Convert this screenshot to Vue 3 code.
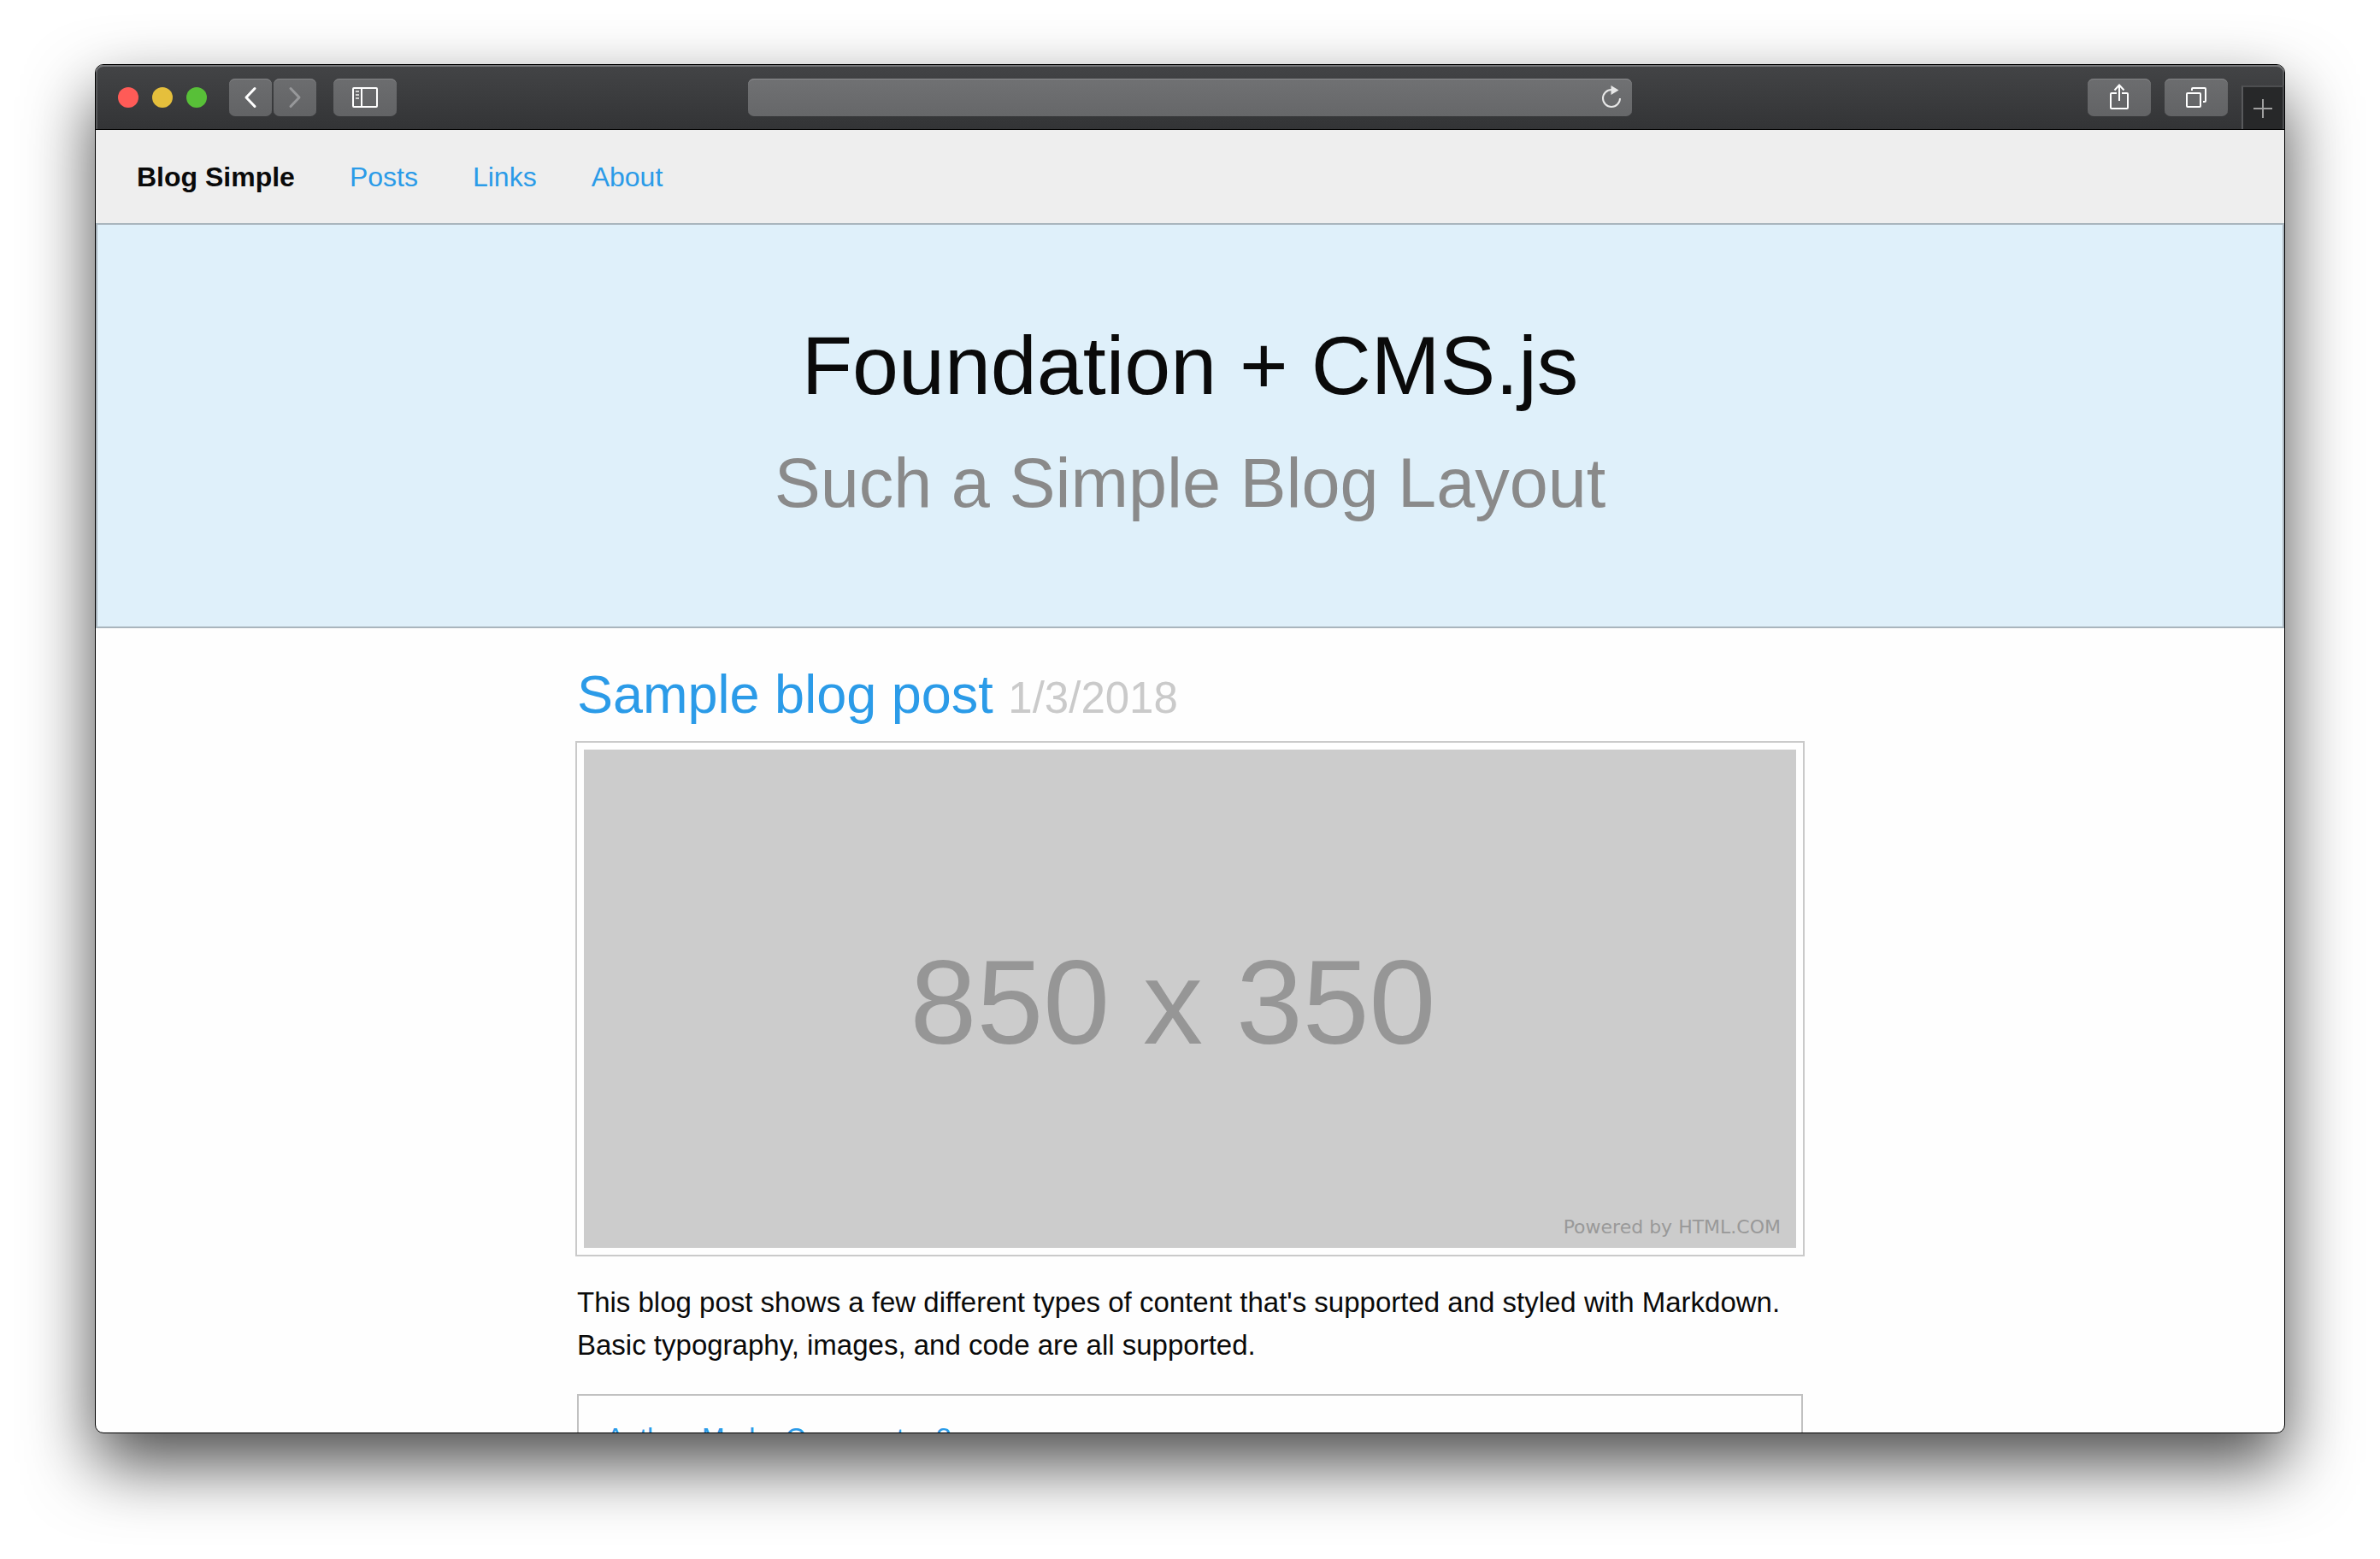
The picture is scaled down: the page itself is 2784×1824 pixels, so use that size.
<script setup>
const links = ['Posts', 'Links', 'About']
const lights = ['close', 'minimize', 'maximize']
</script>

<template>
  <div class="desktop">
    <div class="browser">
      <header class="toolbar">
        <div class="side">
          <div class="lights">
            <button v-for="l in lights" :key="l" type="button" :class="['light', l]" :aria-label="l"></button>
          </div>
          <div class="pair">
            <button type="button" class="tool narrow" aria-label="Back">
              <svg width="50" height="44" viewBox="0 0 50 44"><path d="M30 11.500L20 22l10 10.500" fill="none" stroke="#fff" stroke-width="3" stroke-linecap="round" stroke-linejoin="round" /></svg>
            </button>
            <button type="button" class="tool narrow" aria-label="Forward">
              <svg width="50" height="44" viewBox="0 0 50 44"><path d="M20 11.500L30 22l-10 10.500" fill="none" stroke="#97989a" stroke-width="3" stroke-linecap="round" stroke-linejoin="round" /></svg>
            </button>
          </div>
          <button type="button" class="tool" aria-label="Show sidebar">
            <svg width="74" height="44" viewBox="0 0 74 44">
              <rect x="23" y="11" width="28" height="22" rx="1" fill="none" stroke="#fff" stroke-width="2" />
              <path d="M33 11v22" stroke="#fff" stroke-width="2" />
              <path d="M26 15h4M26 19h4M26 23h4" stroke="#d0d0d0" stroke-width="2" />
            </svg>
          </button>
        </div>
        <div class="address">
          <input type="text" aria-label="Address" />
          <button type="button" class="reload" aria-label="Reload">
            <svg width="24" height="28" viewBox="0 0 24 28">
              <path d="M12 5A10 10 0 1 0 22 15" fill="none" stroke="#e8e8e8" stroke-width="2" />
              <path d="M11.500 0l9 5.500-9 5.500z" fill="#e8e8e8" />
            </svg>
          </button>
        </div>
        <div class="side end">
          <button type="button" class="tool" aria-label="Share">
            <svg width="74" height="44" viewBox="0 0 74 44" fill="none" stroke="#fff" stroke-width="2">
              <path d="M34 17h-6a1 1 0 0 0-1 1v16a1 1 0 0 0 1 1h18a1 1 0 0 0 1-1V18a1 1 0 0 0-1-1h-6" />
              <path d="M37 26V8M31.500 13.500L37 7.500l5.500 6" />
            </svg>
          </button>
          <button type="button" class="tool" aria-label="Show tabs">
            <svg width="74" height="44" viewBox="0 0 74 44" fill="none" stroke="#fff" stroke-width="2">
              <rect x="26" y="17" width="16" height="16" rx="1" />
              <path d="M32 14v-2a1 1 0 0 1 1-1h14a1 1 0 0 1 1 1v14a1 1 0 0 1-1 1h-2" />
            </svg>
          </button>
          <button type="button" class="newtab" aria-label="New tab">
            <svg width="22" height="22" viewBox="0 0 22 22"><path d="M11 0v22M0 11h22" stroke="#a0a0a0" stroke-width="2" /></svg>
          </button>
        </div>
      </header>

      <div class="page">
        <nav class="menu">
          <strong>Blog Simple</strong>
          <a v-for="l in links" :key="l" href="#">{{ l }}</a>
        </nav>
        <section class="hero">
          <h1>Foundation + CMS.js</h1>
          <h2>Such a Simple Blog Layout</h2>
        </section>
        <main>
          <article>
            <h3><a href="#">Sample blog post</a> <small>1/3/2018</small></h3>
            <div class="thumbnail">
              <span class="dimensions">850 x 350</span>
              <span class="credit">Powered by HTML.COM</span>
            </div>
            <p>This blog post shows a few different types of content that's supported and styled with Markdown. Basic typography, images, and code are all supported.</p>
            <div class="callout"><a href="#">Author: Marke Commenter 3</a></div>
          </article>
        </main>
      </div>
    </div>
  </div>
</template>

<style>
body {
  margin: 0;
  background: #fff;
}
</style>

<style scoped>
* {
  box-sizing: border-box;
}
.desktop {
  height: 100vh;
  padding: 75px 111px 147px;
  overflow: hidden;
  font-family: "Liberation Sans", Arial, sans-serif;
  font-size: 32px;
  line-height: 50px;
  color: #0a0a0a;
}
.browser {
  display: flex;
  flex-direction: column;
  height: 100%;
  border: 1px solid #000;
  border-radius: 10px;
  overflow: hidden;
  background: #fefefe;
  box-shadow: 0 36px 80px rgba(0, 0, 0, 0.7);
}
.toolbar {
  display: grid;
  flex: none;
  grid-template-columns: 1fr 1034px 1fr;
  align-items: center;
  height: 76px;
  border-bottom: 1px solid #000;
  border-radius: 9px 9px 0 0;
  background: linear-gradient(#434446, #333436);
  box-shadow: inset 0 2px #76777a, inset 2px 0 #57585a, inset -2px 0 #57585a;
}
.side {
  display: flex;
  align-items: center;
  gap: 20px;
  padding-left: 26px;
}
.side.end {
  align-self: stretch;
  justify-content: flex-end;
  gap: 16px;
  padding: 0;
}
button {
  padding: 0;
  border: 0;
  background: none;
}
svg {
  display: block;
}
.lights {
  display: flex;
  gap: 16px;
  margin-right: 6px;
}
.light {
  width: 24px;
  height: 24px;
  border-radius: 50%;
}
.close {
  background: #ff5b57;
}
.minimize {
  background: #e5bf3c;
}
.maximize {
  background: #58c038;
}
.pair {
  display: flex;
  gap: 2px;
}
.tool {
  width: 74px;
  height: 44px;
  border-radius: 7px;
  background: linear-gradient(#6c6d6f, #626365);
  box-shadow: inset 0 1px #838486;
}
.tool.narrow {
  width: 50px;
}
.address {
  display: flex;
  align-items: center;
  height: 44px;
  padding-right: 12px;
  border-radius: 7px;
  background: linear-gradient(#707173, #666769);
  box-shadow: inset 0 1px #8b8c8e;
}
.address input {
  flex: 1;
  height: 44px;
  padding: 0 16px;
  border: 0;
  outline: 0;
  background: none;
  color: #fff;
  font: inherit;
}
.newtab {
  display: flex;
  align-items: center;
  align-self: flex-end;
  justify-content: center;
  width: 50px;
  height: 51px;
  border-top: 2px solid #4d4e50;
  border-left: 2px solid #58595b;
  border-right: 2px solid #4d4e50;
  background: #272829;
}
.page {
  flex: 1;
  min-height: 0;
  overflow: hidden;
}
a {
  color: #2b9be8;
  text-decoration: none;
}
.menu {
  display: flex;
  align-items: center;
  gap: 64px;
  height: 109px;
  padding: 0 48px;
  background: #eee;
}
.hero {
  padding: 98px 32px 112px;
  border: 2px solid #a9b5bd;
  background: #dff0fa;
  text-align: center;
}
h1,
h2,
h3,
p {
  margin: 0;
  font-weight: 400;
}
h1 {
  margin-bottom: 14px;
  font-size: 97px;
  line-height: 134px;
}
h2 {
  font-size: 81px;
  line-height: 112px;
  color: #8a8a8a;
}
main {
  padding: 34px 32px;
}
article {
  max-width: 1434px;
  margin: 0 auto;
}
h3 {
  margin-bottom: 14px;
  font-size: 63px;
  line-height: 86px;
}
small {
  font-size: 51px;
  line-height: 50px;
  color: #cacaca;
}
.thumbnail {
  position: relative;
  display: flex;
  align-items: center;
  justify-content: center;
  height: 599px;
  margin-bottom: 31px;
  padding: 8px 40px 0 0;
  border: 8px solid #fefefe;
  background: #ccc;
  box-shadow: 0 0 0 2px #cacaca;
}
.dimensions {
  font-size: 140px;
  line-height: 180px;
  color: #969696;
}
.credit {
  position: absolute;
  right: 18px;
  bottom: 8px;
  font-family: "DejaVu Sans", sans-serif;
  font-size: 22px;
  line-height: 32px;
  color: #999;
}
p {
  font-size: 33px;
}
.callout {
  margin-top: 32px;
  padding: 24px 32px;
  border: 2px solid #c1c1c1;
}
</style>
